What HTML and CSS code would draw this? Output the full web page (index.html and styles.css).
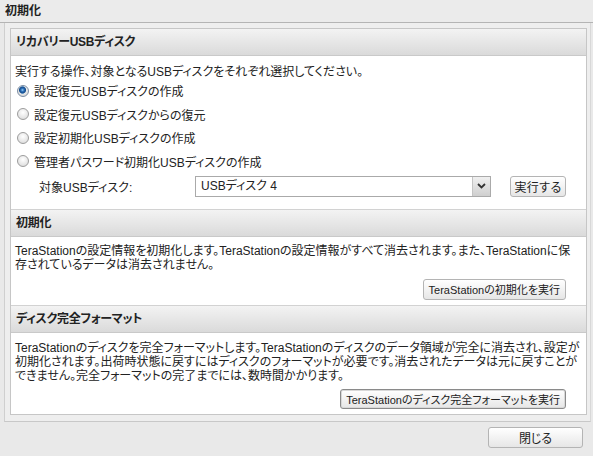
FILE: index.html
```html
<!DOCTYPE html>
<html lang="ja">
<head>
    <meta charset="UTF-8">
    <meta name="viewport" content="width=device-width, initial-scale=1.0">
    <title>初期化</title>
    <link rel="stylesheet" href="styles.css">
</head>
<body>
    <div class="page-title">初期化</div>

    <div class="frame">
        <div class="panel">
            <div class="sec-head">リカバリーUSBディスク</div>
            <div class="sec-body recovery">
                <p>実行する操作、対象となるUSBディスクをそれぞれ選択してください。</p>
                <label class="radio-row"><input type="radio" name="op" checked>設定復元USBディスクの作成</label>
                <label class="radio-row"><input type="radio" name="op">設定復元USBディスクからの復元</label>
                <label class="radio-row"><input type="radio" name="op">設定初期化USBディスクの作成</label>
                <label class="radio-row"><input type="radio" name="op">管理者パスワード初期化USBディスクの作成</label>

                <div class="target-row">
                    <span class="target-label">対象USBディスク:</span>
                    <div class="select">
                        <span class="select-value">USBディスク 4</span>
                        <span class="select-arrow">
                            <svg width="9" height="6" viewBox="0 0 9 6"><path d="M1 1 L4.5 4.5 L8 1" fill="none" stroke="#333" stroke-width="1.8"/></svg>
                        </span>
                    </div>
                    <button class="btn btn-run">実行する</button>
                </div>
            </div>

            <div class="sec-head">初期化</div>
            <div class="sec-body init">
                <p>TeraStationの設定情報を初期化します。TeraStationの設定情報がすべて消去されます。また、TeraStationに保<br>存されているデータは消去されません。</p>
                <div class="actions">
                    <button class="btn">TeraStationの初期化を実行</button>
                </div>
            </div>

            <div class="sec-head">ディスク完全フォーマット</div>
            <div class="sec-body format">
                <p>TeraStationのディスクを完全フォーマットします。TeraStationのディスクのデータ領域が完全に消去され、設定が<br>初期化されます。出荷時状態に戻すにはディスクのフォーマットが必要です。消去されたデータは元に戻すことが<br>できません。完全フォーマットの完了までには、数時間かかります。</p>
                <div class="actions">
                    <button class="btn btn-focus">TeraStationのディスク完全フォーマットを実行</button>
                </div>
            </div>
        </div>
    </div>

    <div class="footer">
        <button class="btn btn-close">閉じる</button>
    </div>
</body>
</html>
```

FILE: styles.css
```css
body {
    margin: 0;
    background: #e9e9e9;
    font-family: "Liberation Sans", "Noto Sans CJK JP", sans-serif;
    font-size: 12px;
    color: #222;
    font-feature-settings: "palt";
}

.page-title {
    height: 22px;
    line-height: 22px;
    padding-left: 5px;
    font-weight: bold;
    border-bottom: 1px solid #b4b4b4;
    background: #ebebeb;
}

.frame {
    margin: 0 2px 0 4px;
    padding: 5px 3px 6px 5px;
    border-left: 1px solid #cfcfcf;
    border-right: 1px solid #d8d8d8;
    border-bottom: 1px solid #c8c8c8;
    background: #eeeeee;
}

.panel {
    background: #fff;
    border: 1px solid #c6c6c6;
}

.sec-head {
    height: 26px;
    line-height: 26px;
    padding-left: 5px;
    font-weight: bold;
    letter-spacing: -0.3px;
    background: linear-gradient(#f3f3f3, #dadada);
    border-top: 1px solid #d2d2d2;
    border-bottom: 1px solid #c9c9c9;
}

.panel .sec-head:first-child {
    border-top: none;
}

.sec-body {
    padding: 7px 20px 5px 4px;
}

.sec-body p {
    margin: 0;
    line-height: 14px;
    white-space: nowrap;
}

.recovery {
    padding-top: 9px;
    padding-bottom: 12px;
}

.format {
    padding-top: 8px;
}

.radio-row {
    display: flex;
    align-items: center;
    height: 23.5px;
}

.radio-row input {
    appearance: none;
    width: 12px;
    height: 12px;
    margin: 0 5px 0 2px;
    border: 1px solid #9c9c9c;
    border-radius: 50%;
    background: radial-gradient(circle at 50% 35%, #ffffff, #d6d6d6);
}

.radio-row input:checked {
    border-color: #7d8ea3;
    background: radial-gradient(circle at 45% 40%, #9fd0f5 0, #2f74bd 1.5px, #174a88 3px, #6f9cc8 3.6px, transparent 4px),
                radial-gradient(circle at 50% 35%, #ffffff, #d0d0d0);
}

.target-row {
    display: grid;
    grid-template-columns: 156px 296px auto;
    align-items: center;
    margin-top: 2.5px;
    padding-left: 24px;
}

.select {
    display: flex;
    height: 19px;
    border: 1px solid #aaa;
    background: #fff;
}

.select-value {
    flex: 1;
    line-height: 19px;
    padding-left: 5px;
}

.select-arrow {
    width: 17px;
    display: flex;
    align-items: center;
    justify-content: center;
    border-left: 1px solid #c4c4c4;
    background: linear-gradient(#f0f0f0, #cfcfcf);
}

.btn {
    height: 21px;
    padding: 0 5px;
    font-family: inherit;
    font-size: 11px;
    color: #222;
    border: 1px solid #b4b4b4;
    border-radius: 3px;
    background: linear-gradient(#ffffff, #e6e6e6);
    font-feature-settings: "palt";
}

.btn-run {
    width: 56px;
    margin-left: 19px;
    padding: 0;
    font-size: 12px;
    letter-spacing: 0.4px;
}

.actions {
    display: flex;
    justify-content: flex-end;
    margin-top: 7px;
}

.format .actions {
    margin-top: 6px;
}

.btn-focus {
    height: 20px;
    border: 1px solid #8a8a8a;
    box-shadow: inset 0 0 0 1px #d8d8d8;
}

.footer {
    display: flex;
    justify-content: flex-end;
    padding: 5px 10px 0 0;
}

.btn-close {
    width: 95px;
    font-size: 12px;
}
```
